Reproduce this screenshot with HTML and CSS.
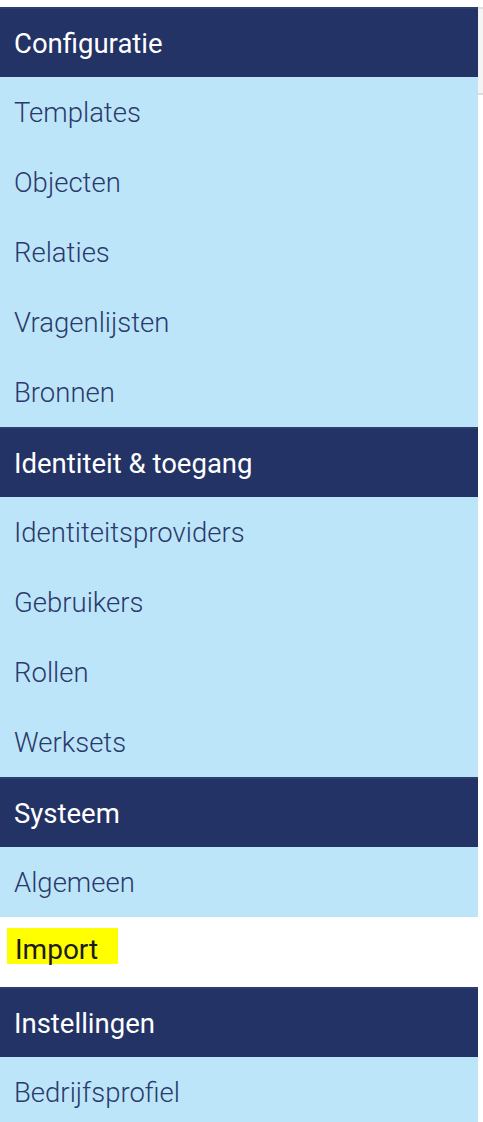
FILE: index.html
```html
<!DOCTYPE html>
<html lang="nl">
<head>
<meta charset="utf-8">
<title>Menu</title>
<link rel="stylesheet" href="styles.css">
</head>
<body>
<div class="page">
  <nav class="sidebar">
    <div class="group-title">Configuratie</div>
    <a class="item">Templates</a>
    <a class="item">Objecten</a>
    <a class="item">Relaties</a>
    <a class="item">Vragenlijsten</a>
    <a class="item">Bronnen</a>
    <div class="group-title">Identiteit &amp; toegang</div>
    <a class="item">Identiteitsproviders</a>
    <a class="item">Gebruikers</a>
    <a class="item">Rollen</a>
    <a class="item">Werksets</a>
    <div class="group-title">Systeem</div>
    <a class="item">Algemeen</a>
    <a class="item item-active"><span class="highlight">Import</span></a>
    <div class="group-title">Instellingen</div>
    <a class="item">Bedrijfsprofiel</a>
  </nav>
  <div class="side">
    <div class="side-box"></div>
  </div>
</div>
</body>
</html>
```

FILE: styles.css
```css
html, body {
  margin: 0;
  padding: 0;
  background: #ffffff;
}
body {
  font-family: Roboto, "Noto Sans", sans-serif;
}
.page {
  display: flex;
  align-items: flex-start;
  padding-top: 7px;
}
.sidebar {
  width: 478px;
  flex: none;
  display: flex;
  flex-direction: column;
}
.group-title {
  box-sizing: border-box;
  height: 70px;
  display: flex;
  align-items: center;
  padding-left: 14px;
  padding-top: 1px;
  background: #243366;
  border-top: 2px solid #2d3d6e;
  color: #ffffff;
  font-size: 27.5px;
  font-weight: 400;
}
.item {
  box-sizing: border-box;
  height: 70px;
  display: flex;
  align-items: center;
  padding-left: 14px;
  background: #bde5fa;
  color: #2a3a6a;
  font-size: 27.5px;
  font-weight: 300;
  text-decoration: none;
}
.item-active {
  background: #ffffff;
  padding-left: 7px;
}
.highlight {
  display: inline-block;
  background: #ffff00;
  color: #1c1c1c;
  font-weight: 400;
  font-size: 28px;
  line-height: 28px;
  padding: 8px 20px 0 8px;
  margin-bottom: 12px;
}
.side {
  flex: 1;
}
.side-box {
  box-sizing: border-box;
  height: 88px;
  background: #f4f4f4;
  border-top: 2px solid #e0e0e0;
  border-bottom: 2px solid #dcdcdc;
}
```
